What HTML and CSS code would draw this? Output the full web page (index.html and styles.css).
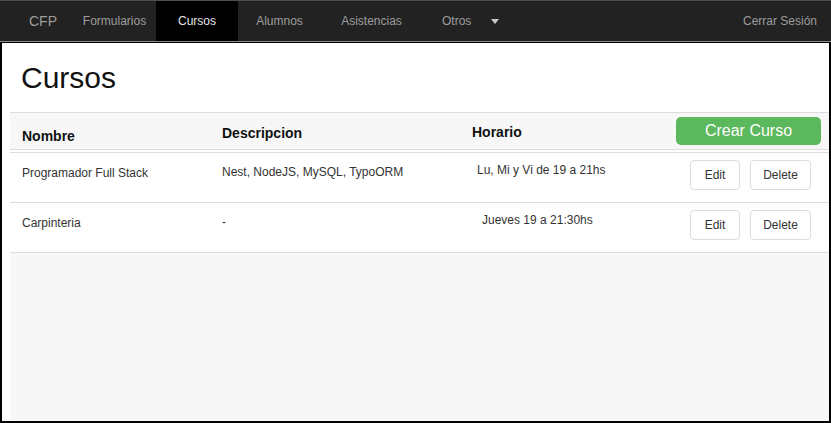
FILE: index.html
```html
<!DOCTYPE html>
<html lang="es">
<head>
<meta charset="utf-8">
<title>CFP - Cursos</title>
<link rel="stylesheet" href="styles.css">
</head>
<body>
<nav class="navbar">
  <a class="brand">CFP</a>
  <a class="nav-link w-form">Formularios</a>
  <a class="nav-link active w-cursos">Cursos</a>
  <a class="nav-link w-alumnos">Alumnos</a>
  <a class="nav-link w-asist">Asistencias</a>
  <a class="nav-link dropdown">Otros<span class="caret"></span></a>
  <a class="nav-link logout">Cerrar Sesión</a>
</nav>
<main class="page">
  <h1 class="title">Cursos</h1>
  <section class="panel">
    <table class="courses">
      <colgroup>
        <col class="c-nombre">
        <col class="c-desc">
        <col class="c-horario">
        <col class="c-acc">
      </colgroup>
      <thead>
        <tr>
          <th class="h-nombre">Nombre</th>
          <th class="h-desc">Descripcion</th>
          <th class="h-horario">Horario</th>
          <th class="h-acc"><button class="btn-create">Crear Curso</button></th>
        </tr>
      </thead>
      <tbody>
        <tr class="first">
          <td class="d-nombre">Programador Full Stack</td>
          <td class="d-desc">Nest, NodeJS, MySQL, TypoORM</td>
          <td class="d-horario indent-sm">Lu, Mi y Vi de 19 a 21hs</td>
          <td class="d-acc"><button class="btn btn-edit">Edit</button><button class="btn btn-delete">Delete</button></td>
        </tr>
        <tr>
          <td class="d-nombre">Carpinteria</td>
          <td class="d-desc">-</td>
          <td class="d-horario indent-lg">Jueves 19 a 21:30hs</td>
          <td class="d-acc"><button class="btn btn-edit">Edit</button><button class="btn btn-delete">Delete</button></td>
        </tr>
      </tbody>
    </table>
  </section>
</main>
</body>
</html>
```

FILE: styles.css
```css
html, body {
  margin: 0;
  padding: 0;
}

body {
  width: 831px;
  height: 423px;
  overflow: hidden;
  display: flex;
  flex-direction: column;
  font-family: "Liberation Sans", Arial, sans-serif;
  background: #fff;
}

/* ---------- navbar ---------- */
.navbar {
  display: flex;
  align-items: stretch;
  height: 40px;
  flex: 0 0 auto;
  background: #222;
  border-top: 1px solid #4d4d4d;
  border-bottom: 1px solid #8a8a8a;
}

.brand {
  width: 73px;
  box-sizing: border-box;
  padding-left: 29px;
  display: flex;
  align-items: center;
  font-size: 14px;
  line-height: 16px;
  color: #9d9d9d;
}

.nav-link {
  display: flex;
  align-items: center;
  justify-content: center;
  font-size: 12px;
  line-height: 14px;
  color: #9d9d9d;
}

.nav-link.active {
  background: #000;
  color: #e6e6e6;
}

.w-form { width: 83px; }
.w-cursos { width: 82px; }
.w-alumnos { width: 83px; }
.w-asist { width: 101px; }

.dropdown {
  justify-content: flex-start;
  padding-left: 20px;
}

.caret {
  width: 0;
  height: 0;
  margin-left: 20px;
  border-left: 4px solid transparent;
  border-right: 4px solid transparent;
  border-top: 5px solid #c8c8c8;
}

.logout {
  margin-left: auto;
  padding-right: 14px;
}

/* ---------- page ---------- */
.page {
  flex: 1 1 auto;
  display: flex;
  flex-direction: column;
  border: 2px solid #000;
  border-top: 1px solid #000;
  background: #fff;
  min-height: 0;
}

.title {
  margin: 0 0 18px 0;
  padding: 18px 0 0 19px;
  font-size: 30px;
  line-height: 33px;
  font-weight: normal;
  color: #111;
}

.panel {
  flex: 1 1 auto;
  margin-left: 8px;
  background: #f7f7f7;
}

/* ---------- table ---------- */
.courses {
  width: 100%;
  table-layout: fixed;
  border-collapse: separate;
  border-spacing: 0;
}

.c-nombre { width: 201px; }
.c-desc { width: 250px; }
.c-horario { width: 207px; }
.c-acc { width: 161px; }

.courses th {
  box-sizing: border-box;
  height: 40px;
  padding: 0 11px;
  text-align: left;
  vertical-align: top;
  font-size: 14px;
  line-height: 16px;
  font-weight: bold;
  color: #111;
  border-top: 1px solid #ddd;
  border-bottom: 2px solid #fff;
  box-shadow: inset 0 -1px 0 #ddd;
}

.courses th.h-nombre { padding-left: 12px; padding-top: 15px; }
.courses th.h-desc { padding-top: 12px; }
.courses th.h-horario { padding-top: 11px; }
.courses th.h-acc { padding: 4px 0 0 8px; }

.courses td {
  box-sizing: border-box;
  height: 50px;
  padding: 0 11px;
  vertical-align: top;
  background: #fff;
  font-size: 12px;
  line-height: 14px;
  color: #333;
  border-bottom: 1px solid #ddd;
}

.courses tr.first td {
  height: 51px;
  border-top: 1px solid #ddd;
}

.courses td.d-nombre { padding-top: 13px; padding-left: 12px; }
.courses td.d-desc { padding-top: 12px; }
.courses td.d-horario { padding-top: 10px; }
.courses td.indent-sm { padding-left: 16px; }
.courses td.indent-lg { padding-left: 21px; }
.courses td.d-acc { padding: 7px 0 0 22px; white-space: nowrap; }

/* ---------- buttons ---------- */
.btn-create {
  width: 145px;
  height: 28px;
  border: none;
  border-radius: 5px;
  background: #5cb85c;
  color: #fff;
  font-family: "Liberation Sans", Arial, sans-serif;
  font-size: 16px;
  line-height: 18px;
  padding: 0;
}

.btn {
  height: 30px;
  padding: 0;
  border: 1px solid #dcdcdc;
  border-radius: 4px;
  background: #fff;
  color: #333;
  font-family: "Liberation Sans", Arial, sans-serif;
  font-size: 12px;
  line-height: 14px;
  vertical-align: top;
}

.btn-edit { width: 50px; }
.btn-delete { width: 61px; margin-left: 10px; }
```
